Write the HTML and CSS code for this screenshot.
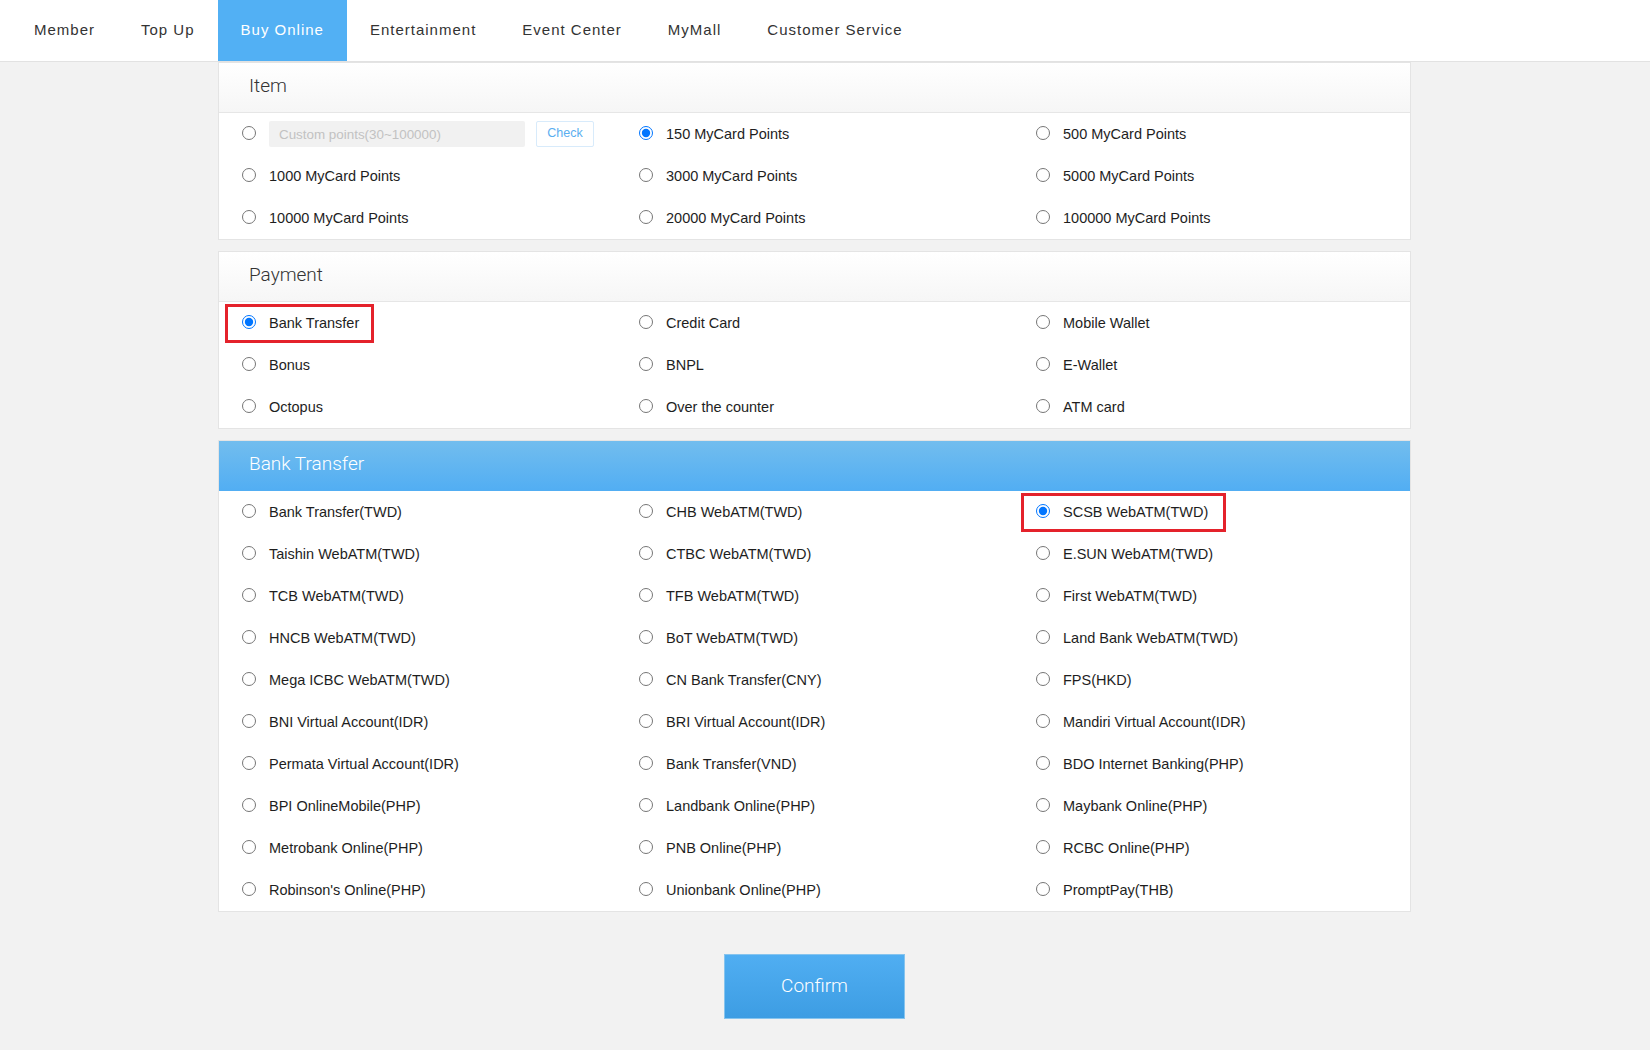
FILE: index.html
```html
<!DOCTYPE html>
<html lang="en">
<head>
  <meta charset="UTF-8">
  <meta name="viewport" content="width=device-width, initial-scale=1.0">
  <title>MyCard - Buy Online</title>
  <link rel="stylesheet" href="styles.css">
</head>
<body>

<div class="topnav">
  <ul class="nav-list">
    <li class="nav-item">Member</li>
    <li class="nav-item">Top Up</li>
    <li class="nav-item active">Buy Online</li>
    <li class="nav-item">Entertainment</li>
    <li class="nav-item">Event Center</li>
    <li class="nav-item">MyMall</li>
    <li class="nav-item">Customer Service</li>
  </ul>
</div>

<div class="main">
  <!-- Item -->
  <div class="panel">
    <div class="panel-head">Item</div>
    <div class="options">
      <div class="cell">
        <label class="opt">
          <input type="radio" name="item">
        </label>
        <input class="custom-points" type="text" placeholder="Custom points(30~100000)">
        <button class="check-btn">Check</button>
      </div>
      <div class="cell"><label class="opt"><input type="radio" name="item" checked>150 MyCard Points</label></div>
      <div class="cell"><label class="opt"><input type="radio" name="item">500 MyCard Points</label></div>
      <div class="cell"><label class="opt"><input type="radio" name="item">1000 MyCard Points</label></div>
      <div class="cell"><label class="opt"><input type="radio" name="item">3000 MyCard Points</label></div>
      <div class="cell"><label class="opt"><input type="radio" name="item">5000 MyCard Points</label></div>
      <div class="cell"><label class="opt"><input type="radio" name="item">10000 MyCard Points</label></div>
      <div class="cell"><label class="opt"><input type="radio" name="item">20000 MyCard Points</label></div>
      <div class="cell"><label class="opt"><input type="radio" name="item">100000 MyCard Points</label></div>
    </div>
  </div>

  <!-- Payment -->
  <div class="panel">
    <div class="panel-head">Payment</div>
    <div class="options">
      <div class="cell"><label class="opt marked"><input type="radio" name="pay" checked>Bank Transfer</label></div>
      <div class="cell"><label class="opt"><input type="radio" name="pay">Credit Card</label></div>
      <div class="cell"><label class="opt"><input type="radio" name="pay">Mobile Wallet</label></div>
      <div class="cell"><label class="opt"><input type="radio" name="pay">Bonus</label></div>
      <div class="cell"><label class="opt"><input type="radio" name="pay">BNPL</label></div>
      <div class="cell"><label class="opt"><input type="radio" name="pay">E-Wallet</label></div>
      <div class="cell"><label class="opt"><input type="radio" name="pay">Octopus</label></div>
      <div class="cell"><label class="opt"><input type="radio" name="pay">Over the counter</label></div>
      <div class="cell"><label class="opt"><input type="radio" name="pay">ATM card</label></div>
    </div>
  </div>

  <!-- Bank Transfer channels -->
  <div class="panel">
    <div class="panel-head blue">Bank Transfer</div>
    <div class="options">
      <div class="cell"><label class="opt"><input type="radio" name="bank">Bank Transfer(TWD)</label></div>
      <div class="cell"><label class="opt"><input type="radio" name="bank">CHB WebATM(TWD)</label></div>
      <div class="cell"><label class="opt marked wide"><input type="radio" name="bank" checked>SCSB WebATM(TWD)</label></div>
      <div class="cell"><label class="opt"><input type="radio" name="bank">Taishin WebATM(TWD)</label></div>
      <div class="cell"><label class="opt"><input type="radio" name="bank">CTBC WebATM(TWD)</label></div>
      <div class="cell"><label class="opt"><input type="radio" name="bank">E.SUN WebATM(TWD)</label></div>
      <div class="cell"><label class="opt"><input type="radio" name="bank">TCB WebATM(TWD)</label></div>
      <div class="cell"><label class="opt"><input type="radio" name="bank">TFB WebATM(TWD)</label></div>
      <div class="cell"><label class="opt"><input type="radio" name="bank">First WebATM(TWD)</label></div>
      <div class="cell"><label class="opt"><input type="radio" name="bank">HNCB WebATM(TWD)</label></div>
      <div class="cell"><label class="opt"><input type="radio" name="bank">BoT WebATM(TWD)</label></div>
      <div class="cell"><label class="opt"><input type="radio" name="bank">Land Bank WebATM(TWD)</label></div>
      <div class="cell"><label class="opt"><input type="radio" name="bank">Mega ICBC WebATM(TWD)</label></div>
      <div class="cell"><label class="opt"><input type="radio" name="bank">CN Bank Transfer(CNY)</label></div>
      <div class="cell"><label class="opt"><input type="radio" name="bank">FPS(HKD)</label></div>
      <div class="cell"><label class="opt"><input type="radio" name="bank">BNI Virtual Account(IDR)</label></div>
      <div class="cell"><label class="opt"><input type="radio" name="bank">BRI Virtual Account(IDR)</label></div>
      <div class="cell"><label class="opt"><input type="radio" name="bank">Mandiri Virtual Account(IDR)</label></div>
      <div class="cell"><label class="opt"><input type="radio" name="bank">Permata Virtual Account(IDR)</label></div>
      <div class="cell"><label class="opt"><input type="radio" name="bank">Bank Transfer(VND)</label></div>
      <div class="cell"><label class="opt"><input type="radio" name="bank">BDO Internet Banking(PHP)</label></div>
      <div class="cell"><label class="opt"><input type="radio" name="bank">BPI OnlineMobile(PHP)</label></div>
      <div class="cell"><label class="opt"><input type="radio" name="bank">Landbank Online(PHP)</label></div>
      <div class="cell"><label class="opt"><input type="radio" name="bank">Maybank Online(PHP)</label></div>
      <div class="cell"><label class="opt"><input type="radio" name="bank">Metrobank Online(PHP)</label></div>
      <div class="cell"><label class="opt"><input type="radio" name="bank">PNB Online(PHP)</label></div>
      <div class="cell"><label class="opt"><input type="radio" name="bank">RCBC Online(PHP)</label></div>
      <div class="cell"><label class="opt"><input type="radio" name="bank">Robinson's Online(PHP)</label></div>
      <div class="cell"><label class="opt"><input type="radio" name="bank">Unionbank Online(PHP)</label></div>
      <div class="cell"><label class="opt"><input type="radio" name="bank">PromptPay(THB)</label></div>
    </div>
  </div>

  <div class="actions">
    <button class="confirm-btn">Confirm</button>
  </div>
</div>

</body>
</html>
```

FILE: styles.css
```css
/* Page */
body {
  margin: 0;
  padding: 0;
  background-color: #f2f2f2;
  font-family: 'Liberation Sans', Arial, sans-serif;
  color: #222;
}

/* Top navigation */
.topnav {
  height: 61px;
  background-color: #fff;
  border-bottom: 1px solid #e2e2e2;
}
.nav-list {
  display: flex;
  margin: 0;
  padding: 0 0 0 11px;
  list-style: none;
}
.nav-item {
  padding: 0 23px;
  line-height: 59px;
  height: 61px;
  font-size: 15px;
  letter-spacing: 1px;
  color: #333;
  cursor: pointer;
}
.nav-item.active {
  background-color: #52b0f4;
  color: #fff;
}

/* Content column */
.main {
  width: 1193px;
  margin-left: 218px;
}
.panel {
  background-color: #fff;
  border: 1px solid #e4e4e4;
  margin-bottom: 11px;
}
.panel-head {
  height: 49px;
  line-height: 46px;
  padding-left: 30px;
  font-family: Roboto, 'Liberation Sans', sans-serif;
  font-weight: 300;
  font-size: 19px;
  color: #333;
  background: linear-gradient(#fff, #f6f6f6);
  border-bottom: 1px solid #e6e6e6;
}
.panel-head.blue {
  color: #fff;
  background: linear-gradient(#72bdee, #52aef3);
  border-bottom: 1px solid #52aef3;
}

/* Radio grid */
.options {
  display: grid;
  grid-template-columns: repeat(3, 1fr);
}
.cell {
  display: flex;
  align-items: center;
  height: 42px;
  padding-left: 23px;
}
.opt {
  display: inline-flex;
  align-items: center;
  line-height: 18px;
  font-size: 14.5px;
  color: #1e1e1e;
  cursor: pointer;
}
.opt input {
  width: 14px;
  height: 14px;
  margin: 0 13px 3px 0;
}
.opt.marked {
  padding: 7px 12px 8px 14px;
  margin: -7px -12px -8px -14px;
  outline: 3px solid #e4222b;
}
.opt.marked.wide {
  padding: 7px 15px 8px 12px;
  margin: -7px -15px -8px -12px;
}

/* Custom points */
.custom-points {
  width: 256px;
  height: 26px;
  box-sizing: border-box;
  padding: 0 10px;
  border: none;
  border-radius: 2px;
  background-color: #f1f1f1;
  font-family: 'Liberation Sans', Arial, sans-serif;
  font-size: 13.4px;
}
.custom-points::placeholder {
  color: #c2c2c2;
}
.check-btn {
  width: 58px;
  height: 26px;
  margin-left: 11px;
  padding: 0 0 2px;
  border: 1px solid #d8ebfb;
  border-radius: 2px;
  background-color: #fff;
  color: #5aaef0;
  font-family: 'Liberation Sans', Arial, sans-serif;
  font-size: 12.5px;
  cursor: pointer;
}

/* Confirm */
.actions {
  display: flex;
  justify-content: center;
  padding-top: 31px;
}
.confirm-btn {
  width: 181px;
  height: 65px;
  padding-bottom: 3px;
  border: 1px solid #86c4ee;
  background: linear-gradient(#50aef2, #3d9de3);
  color: #fff;
  font-family: Roboto, 'Liberation Sans', sans-serif;
  font-weight: 300;
  font-size: 19px;
  cursor: pointer;
}
```
